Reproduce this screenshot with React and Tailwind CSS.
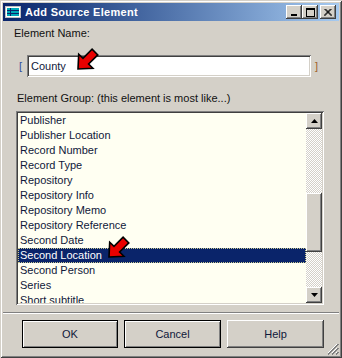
// App.jsx — "Add Source Element" dialog, Windows classic look.

const ITEMS = [
  "Publisher",
  "Publisher Location",
  "Record Number",
  "Record Type",
  "Repository",
  "Repository Info",
  "Repository Memo",
  "Repository Reference",
  "Second Date",
  "Second Location",
  "Second Person",
  "Series",
  "Short subtitle",
];
const SELECTED = "Second Location";

// classic 3D bevels
const RAISED =
  "shadow-[inset_-1px_-1px_#404040,inset_1px_1px_#ffffff,inset_-2px_-2px_#808080,inset_2px_2px_#d4d0c8]";
const SUNKEN =
  "shadow-[inset_1px_1px_#808080,inset_-1px_-1px_#ffffff,inset_2px_2px_#404040,inset_-2px_-2px_#d4d0c8]";

function RedArrow({ className }) {
  return (
    <svg width="24" height="24" viewBox="0 0 24 24" className={className}>
      <polygon
        points="2,21 2.7,6.2 7,10.4 16.1,1.2 21.8,6.9 12.6,16 16.9,20.3"
        fill="#e80000"
        stroke="#000"
        strokeWidth="1.6"
        strokeLinejoin="miter"
      />
    </svg>
  );
}

function TitleButton({ children, className = "" }) {
  return (
    <div
      className={`w-[16px] h-[14px] bg-[#d4d0c8] flex items-center justify-center ${RAISED} ${className}`}
    >
      {children}
    </div>
  );
}

function ScrollButton({ up }) {
  return (
    <div className={`w-[16px] h-[16px] bg-[#d4d0c8] flex items-center justify-center ${RAISED}`}>
      <svg width="7" height="4" viewBox="0 0 7 4">
        {up ? (
          <polygon points="3.5,0 7,4 0,4" fill="#000" />
        ) : (
          <polygon points="0,0 7,0 3.5,4" fill="#000" />
        )}
      </svg>
    </div>
  );
}

export default function App() {
  return (
    <div className="relative w-[342px] h-[358px] bg-[#d4d0c8] p-[3px] flex flex-col font-['Liberation_Sans',Arial,sans-serif] text-[11px] text-[#111] shadow-[inset_1px_1px_#d4d0c8,inset_-1px_-1px_#404040,inset_2px_2px_#ffffff,inset_-2px_-2px_#808080]">
      {/* title bar */}
      <div className="h-[18px] flex items-center bg-linear-to-r from-[#0a246a] to-[#a6caf0] pl-[2px] pr-[3px]">
        <svg width="16" height="12" viewBox="0 0 16 12" className="shrink-0">
          <rect x="0.5" y="0.5" width="15" height="11" fill="#ffffff" stroke="#c0c0c0" />
          <rect x="2" y="2" width="12" height="8" fill="#00a8b8" />
          <line x1="2" y1="4.5" x2="14" y2="4.5" stroke="#0a246a" />
          <line x1="2" y1="7.5" x2="14" y2="7.5" stroke="#0a246a" />
          <line x1="5.5" y1="2" x2="5.5" y2="10" stroke="#0a246a" />
        </svg>
        <span className="ml-[4px] text-white font-bold tracking-[0.3px] leading-[18px]">
          Add Source Element
        </span>
        <div className="ml-auto flex items-center">
          <TitleButton>
            <svg width="8" height="8" viewBox="0 0 8 8">
              <rect x="1" y="6" width="6" height="2" fill="#000" />
            </svg>
          </TitleButton>
          <TitleButton>
            <svg width="9" height="9" viewBox="0 0 9 9">
              <rect x="0.5" y="0.5" width="8" height="8" fill="none" stroke="#000" />
              <rect x="0" y="0" width="9" height="2" fill="#000" />
            </svg>
          </TitleButton>
          <TitleButton className="ml-[2px]">
            <svg width="8" height="7" viewBox="0 0 8 7">
              <path d="M0.5 0 L7.5 7 M1.5 0 L8 6.5 M7.5 0 L0.5 7 M6.5 0 L0 6.5" stroke="#000" strokeWidth="1" />
            </svg>
          </TitleButton>
        </div>
      </div>

      {/* Element Name */}
      <div className="mt-[6px] ml-[11px] leading-[13px]">Element Name:</div>
      <div className="mt-[15px] h-[22px] pl-[16px] flex items-center">
        <span className="w-[8px] text-[#2f4f9f]">[</span>
        <div className={`w-[284px] h-[22px] bg-white pl-[4px] flex items-center text-[#10183a] ${SUNKEN}`}>
          County
        </div>
        <span className="ml-[4px] text-[#a0602a]">]</span>
      </div>

      {/* Element Group */}
      <div className="mt-[15px] ml-[14px] leading-[13px]">
        Element Group: (this element is most like...)
      </div>
      <div className={`mt-[6px] ml-[13px] w-[308px] h-[194px] bg-[#fffff2] p-[2px] flex ${SUNKEN}`}>
        <div className="w-[288px] overflow-hidden">
          {ITEMS.map((it) => (
            <div
              key={it}
              className={
                it === SELECTED
                  ? "h-[15px] leading-[15px] pl-[2px] bg-[#0a246a] text-white outline-1 outline-dotted outline-[#c8c890] -outline-offset-1"
                  : "h-[15px] leading-[15px] pl-[2px] text-[#10183a]"
              }
            >
              {it}
            </div>
          ))}
        </div>
        <div className="w-[16px] flex flex-col">
          <ScrollButton up />
          <div className="flex-1 bg-[repeating-conic-gradient(#ffffff_0%_25%,#d4d0c8_0%_50%)] bg-[length:2px_2px]">
            <div className={`mt-[64px] h-[59px] bg-[#d4d0c8] ${RAISED}`} />
          </div>
          <ScrollButton />
        </div>
      </div>

      {/* separator */}
      <div className="mt-[7px] h-[2px] border-t border-t-[#808080] border-b border-b-white" />

      {/* buttons */}
      <div className="mt-[6px] pl-[19px] flex text-[#10183a]">
        <button className="w-[96px] h-[28px] border border-black bg-[#d4d0c8] shadow-[inset_1px_1px_#ffffff,inset_-1px_-1px_#808080]">
          OK
        </button>
        <button className="ml-[6px] w-[97px] h-[28px] border border-black bg-[#d4d0c8] shadow-[inset_1px_1px_#ffffff,inset_-1px_-1px_#808080]">
          Cancel
        </button>
        <button className={`ml-[6px] w-[97px] h-[28px] bg-[#d4d0c8] ${RAISED}`}>Help</button>
      </div>

      {/* size grip */}
      <svg width="12" height="12" viewBox="0 0 12 12" className="absolute right-[3px] bottom-[3px]">
        <path d="M11 1 L1 11 M11 5 L5 11 M11 9 L9 11" stroke="#808080" strokeWidth="1" />
        <path d="M12 1 L1 12 M12 5 L5 12 M12 9 L9 12" stroke="#808080" strokeWidth="1" />
        <path d="M10 1 L1 10 M10 5 L5 10 M10 9 L9 10" stroke="#ffffff" strokeWidth="1" />
      </svg>

      {/* annotation arrows */}
      <RedArrow className="absolute left-[76px] top-[48px]" />
      <RedArrow className="absolute left-[107px] top-[236px]" />
    </div>
  );
}
